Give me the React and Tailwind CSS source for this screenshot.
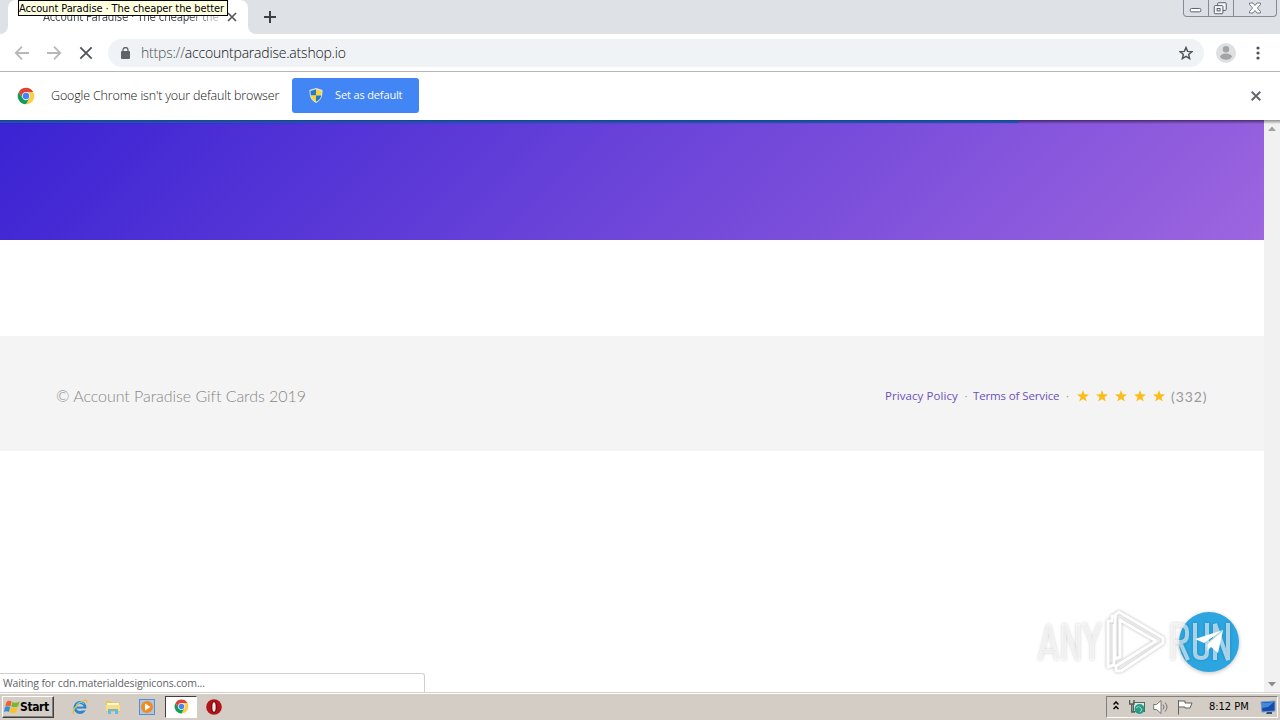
import React from 'react';

function ChromeLogo({ className }) {
  return (
    <svg className={className} viewBox="0 0 48 48">
      <circle cx="24" cy="24" r="22" fill="#fff" />
      <path d="M24 13 H43.1 A22 22 0 0 1 24 46 L33.5 29.5 Z" fill="#ffcd40" />
      <path d="M4.9 13 A22 22 0 0 0 24 46 L33.5 29.5 L14.5 29.5 Z" fill="#0f9d58" />
      <path d="M4.9 13 A22 22 0 0 1 43.1 13 H24 L14.5 29.5 Z" fill="#db4437" />
      <circle cx="24" cy="24" r="11" fill="#f1f1f1" />
      <circle cx="24" cy="24" r="8.6" fill="#4285f4" />
    </svg>
  );
}

function TabStrip() {
  return (
    <div className="relative flex h-[34px] shrink-0 bg-[#dee1e6]">
      <div className="w-2 bg-white">
        <div className="h-full rounded-br-lg bg-[#dee1e6]" />
      </div>
      <div className="flex h-full w-[240px] items-center rounded-t-lg bg-white pl-[35px]">
        <div className="w-[180px] overflow-hidden whitespace-nowrap bg-linear-to-r from-[#45494d] from-80% to-[#e0e0e0] bg-clip-text pt-px text-[11.5px] tracking-[-0.24px] text-transparent">
          Account Paradise · The cheaper the
        </div>
        <svg className="ml-[4px] size-[10px]" viewBox="0 0 10 10" stroke="#54585c" strokeWidth="1.7">
          <path d="M1 1L9 9M9 1L1 9" />
        </svg>
      </div>
      <div className="w-2 bg-white">
        <div className="h-full rounded-bl-lg bg-[#dee1e6]" />
      </div>
      <svg className="ml-[7px] mt-[10px] size-[14px]" viewBox="0 0 14 14" stroke="#3c4043" strokeWidth="2">
        <path d="M7 1V13M1 7H13" />
      </svg>
      <div className="ml-auto mr-[3px] flex h-[17px] w-[94px] overflow-hidden rounded-b-[4px] border border-t-0 border-[#858b95] bg-[#dce0e6]">
        <div className="w-[25px] border-r border-[#858b95]">
          <svg className="size-full" viewBox="0 0 25 16" fill="#fff" stroke="#555b66">
            <rect x="6.5" y="8.5" width="11" height="3.5" rx="1.2" />
          </svg>
        </div>
        <div className="w-[25px] border-r border-[#858b95]">
          <svg className="size-full" viewBox="0 0 25 16" fill="#f5f6f8" stroke="#555b66">
            <rect x="9" y="2.5" width="9" height="8" rx="1" />
            <rect x="5.5" y="5.5" width="9" height="8.5" rx="1" />
            <rect x="8.5" y="8.5" width="3" height="2.5" />
          </svg>
        </div>
        <div className="flex-1">
          <svg className="size-full" viewBox="0 0 42 16" fill="#fff" stroke="#666c76" strokeWidth="0.9">
            <path d="M15.5 3H19L21 5.5L23 3H26.5V4.5L23.4 8L26.5 11.5V13H23L21 10.5L19 13H15.5V11.5L18.6 8L15.5 4.5Z" />
          </svg>
        </div>
      </div>
      <div className="absolute left-[18px] top-0 h-4 w-[210px] whitespace-nowrap border border-black bg-[#ffffe1] text-[11px] leading-[15px] tracking-[-0.1px] text-black">
        Account Paradise · The cheaper the better
      </div>
    </div>
  );
}

function Toolbar() {
  return (
    <div className="flex h-[38px] shrink-0 items-center border-b border-[#b3b5b7] bg-white">
      <svg className="ml-[14px] size-4" viewBox="0 0 16 16" fill="none" stroke="#b6b8ba" strokeWidth="1.8">
        <path d="M15 8H2M8 1.7L1.8 8L8 14.3" />
      </svg>
      <svg className="ml-4 size-4" viewBox="0 0 16 16" fill="none" stroke="#b6b8ba" strokeWidth="1.8">
        <path d="M1 8H14M8 1.7L14.2 8L8 14.3" />
      </svg>
      <svg className="ml-4 size-4" viewBox="0 0 16 16" fill="none" stroke="#505458" strokeWidth="1.8">
        <path d="M2.3 2.3L13.7 13.7M13.7 2.3L2.3 13.7" />
      </svg>
      <div className="ml-[14px] flex h-7 w-[1096px] items-center rounded-full bg-[#f0f3f5] pl-[13px]">
        <svg className="h-3 w-[9px]" viewBox="0 0 9 12" fill="#5f6368">
          <rect x="0" y="4" width="9" height="8" rx="1" />
          <path d="M2 5V3A2.5 2.5 0 0 1 7 3V5" fill="none" stroke="#5f6368" strokeWidth="1.3" />
        </svg>
        <div className="-mt-px ml-[11px] whitespace-nowrap font-['Open_Sans'] text-[14px] font-light tracking-[-0.2px] text-[#101114]">
          <span className="text-[#4b5055]">https://</span>accountparadise.atshop.io
        </div>
        <svg className="ml-auto mr-[11px] size-[14px]" viewBox="0 0 24 24" fill="none" stroke="#50555a" strokeWidth="2.5">
          <path d="M12 2.5L14.8 9.2L22 9.8L16.5 14.5L18.2 21.6L12 17.8L5.8 21.6L7.5 14.5L2 9.8L9.2 9.2Z" />
        </svg>
      </div>
      <svg className="ml-3 size-5" viewBox="0 0 20 20">
        <circle cx="10" cy="10" r="10" fill="#dfe0e2" />
        <circle cx="10" cy="6.2" r="3.2" fill="#a2a4a7" />
        <ellipse cx="10" cy="13.6" rx="5.8" ry="3.1" fill="#a2a4a7" />
      </svg>
      <svg className="ml-[20px] h-4 w-1" viewBox="0 0 4 16" fill="#505458">
        <circle cx="2" cy="3" r="1.6" />
        <circle cx="2" cy="8" r="1.6" />
        <circle cx="2" cy="13" r="1.6" />
      </svg>
    </div>
  );
}

function DefaultBrowserBar() {
  return (
    <div className="flex h-[48px] shrink-0 items-center bg-white">
      <ChromeLogo className="ml-[17px] size-[18px]" />
      <div className="ml-4 w-[241px] whitespace-nowrap font-['Open_Sans'] text-[12.5px] font-light tracking-[-0.16px] text-[#101114]">
        Google Chrome isn't your default browser
      </div>
      <div className="mb-px flex h-[35px] w-[127px] items-center rounded-[3px] bg-[#4285f4] pl-[17px] font-['Open_Sans'] text-[11px] text-white">
        <svg className="h-[15px] w-[14px]" viewBox="0 0 14 15">
          <path d="M7 0L13.5 2C13.5 8 12.5 12 7 15C1.5 12 .5 8 .5 2Z" fill="#e4e7e5" />
          <path d="M7 1.2V7.5H1.8C1.5 6 1.5 4.5 1.5 2.9Z" fill="#2878c8" />
          <path d="M7 1.2V7.5H12.2C12.5 6 12.5 4.5 12.5 2.9Z" fill="#fbd334" />
          <path d="M7 7.5V13.8C4 12.2 2.3 10.5 1.8 7.5Z" fill="#fbd334" />
          <path d="M7 7.5V13.8C10 12.2 11.7 10.5 12.2 7.5Z" fill="#2878c8" />
        </svg>
        <span className="-mt-px ml-3 whitespace-nowrap tracking-[-0.14px]">Set as default</span>
      </div>
      <svg className="ml-auto mr-[19px] size-[10px]" viewBox="0 0 10 10" stroke="#65696d" strokeWidth="2">
        <path d="M.7 .7L9.3 9.3M9.3 .7L.7 9.3" />
      </svg>
    </div>
  );
}

function Star() {
  return (
    <svg className="size-3" viewBox="0 0 24 24" fill="#fbbd17">
      <path d="M12 0L15 8.6L24 8.9L16.9 14.4L19.4 23L12 18L4.6 23L7.1 14.4L0 8.9L9 8.6Z" />
    </svg>
  );
}

function ShopPage() {
  return (
    <div className="flex-1 bg-white">
      <div className="h-[120px] bg-[linear-gradient(135deg,#3a23d3_0%,#9d65df_100%)]">
        <div className="h-[4px] bg-linear-to-b from-black/50 to-transparent">
          <div className="h-[3px] w-[1019px] bg-linear-to-b from-[#184489] to-[#2058c0]" />
        </div>
      </div>
      <div className="mt-24 flex h-[115px] items-center bg-[#f4f4f4] pl-14 pr-[57px]">
        <div className="mt-[4px] whitespace-nowrap font-[Lato] text-[16px] font-light tracking-[-0.05px] text-[#888]">
          © Account Paradise Gift Cards 2019
        </div>
        <div className="ml-auto mt-[5px] flex items-center whitespace-nowrap font-['Open_Sans'] text-[11.5px] text-[#6c50b8]">
          <span className="w-[74px] tracking-[0.07px]">Privacy Policy</span>
          <span className="w-[14px] text-center text-[#999]">·</span>
          <span className="w-[87px] tracking-[-0.13px]">Terms of Service</span>
          <span className="w-[15px] text-center text-[#999]">·</span>
          <span className="-mt-px ml-[2px] flex gap-[7px]">
            <Star /><Star /><Star /><Star /><Star />
          </span>
          <span className="ml-[6px] w-[36px] pt-px font-[Lato] text-[14px] tracking-[0.9px] text-[#999]">(332)</span>
        </div>
      </div>
    </div>
  );
}

function Scrollbar() {
  return (
    <div className="flex w-4 shrink-0 flex-col justify-between bg-[#f1f1f1] bg-linear-to-b from-[#909090] to-[#f1f1f1] to-[4px] pb-[5px] pt-[6px]">
      <svg className="mx-auto h-[6px] w-2" viewBox="0 0 8 6" fill="#a0a0a0"><path d="M4 0.5L8 5H0Z" /></svg>
      <svg className="mx-auto h-[6px] w-2" viewBox="0 0 8 6" fill="#8c8c8c"><path d="M4 5.5L8 1H0Z" /></svg>
    </div>
  );
}

function Watermark() {
  return (
    <div className="absolute bottom-4 right-[38px] h-[68px] w-[206px]">
      <div className="absolute right-[3px] top-[4px] size-[60px] rounded-full bg-[#2ca5e0] shadow-[0_1px_4px_rgba(0,0,0,0.25)]" />
      <svg className="absolute inset-0 size-full drop-shadow-[0_0_1.5px_rgba(0,0,0,0.3)]" viewBox="0 0 206 68">
        <g fill="none" stroke="#fff" strokeOpacity="0.6" strokeWidth="4">
          <path d="M4 52L12.5 17L21 52M7 43H18" />
          <path d="M28 52V16L42 52V16" />
          <path d="M48 15L56 35L64 15M56 35V52" />
          <path d="M137 52V17H144Q151 17 151 24V27Q151 34 144 34H137M144 34L152 52" />
          <path d="M159 15V44Q159 50 165 50Q171 50 171 44V15" />
          <path d="M179 52V16L192 52V15" />
        </g>
        <g fill="#fff" fillOpacity="0.12" stroke="#fff" strokeWidth="3" strokeLinejoin="round">
          <path d="M83 4L127 30V35L85 63H80V58L120 33L84 12V49L79 51V7Z" />
          <path d="M81 8H76V13H72V59L78 57V16" fill="none" />
        </g>
      </svg>
      <svg className="absolute right-[18px] top-[21px] h-[26px] w-[29px]" viewBox="0 0 29 26" fill="#fff">
        <path d="M0 10L28 1L9 14Z" />
        <path d="M28 1L23 24L16 18L12 22L11 15Z" />
        <path d="M27 2L12 15V21" fill="none" stroke="#a6c5d5" strokeWidth="0.9" />
      </svg>
    </div>
  );
}

function Explorer() {
  return (
    <svg className="size-4" viewBox="0 0 16 16">
      <circle cx="8" cy="8.5" r="5" fill="none" stroke="#2687d2" strokeWidth="3" />
      <path d="M5 8.6H14" stroke="#2687d2" strokeWidth="2" />
      <path d="M10 10.5H15" stroke="#d6d3ce" strokeWidth="1.8" />
      <path d="M2 15C-1 13 5 4 12 1.5C15 .7 16 2 14 4" fill="none" stroke="#e8bc40" strokeWidth="1.3" />
      <path d="M4 6Q8 1 12 5" fill="none" stroke="#75c7f1" />
    </svg>
  );
}

function Taskbar() {
  return (
    <div className="flex h-[28px] shrink-0 items-center border-t border-[#d4d0c8] bg-[#d4cdc5] text-[11px] text-black shadow-[inset_0_1px_0_#ffffff]">
      <div className="ml-[2px] flex h-[22px] w-[52px] items-center border border-b-[#404040] border-l-white border-r-[#404040] border-t-white pl-px shadow-[inset_-1px_-1px_0_#808080]">
        <svg className="size-4 shrink-0" viewBox="0 0 16 16">
          <path d="M2.5 3C4 1 6 1.5 7.7 2.5L6.4 7.4C5 6.5 3 6.5 1.2 7.3Z" fill="#ef622d" />
          <path d="M8.5 3C10 4 12.5 4 15.5 2.5L14 7.5C11.5 8.5 9 8.5 7.2 7.5Z" fill="#78b82a" />
          <path d="M1 8.1C2.5 7.1 4.5 7.1 6.2 8.1L4.9 13C3.5 12 1.5 12 0 13Z" fill="#388dd7" />
          <path d="M6.9 8.3C8.5 9.5 11 9.5 13.7 8.2L12.3 13C10 14.5 7.5 14 5.5 13Z" fill="#f9c326" />
        </svg>
        <span className="w-[32px] font-['DejaVu_Sans_Condensed'] text-[12px] font-bold tracking-[-0.4px]">Start</span>
      </div>
      <div className="ml-[18px] flex items-center">
        <Explorer />
        <svg className="ml-[17px] size-4" viewBox="0 0 16 16">
          <path d="M1 2H6L7 3.5H15V13H1Z" fill="#e9c65a" />
          <path d="M2 4H14V9H2Z" fill="#fff7ce" />
          <path d="M1 6H15V12H1Z" fill="#f8df87" />
          <path d="M3 15V10H13V15H10V12H6V15Z" fill="#69b9df" />
        </svg>
        <svg className="ml-[18px] size-4" viewBox="0 0 16 16">
          <rect x=".5" y=".5" width="15" height="15" fill="#a8c9eb" stroke="#598fc5" />
          <circle cx="8" cy="8" r="6" fill="#f38a20" />
          <path d="M6 4.5L11.5 8L6 11.5Z" fill="#fff" />
        </svg>
        <div className="ml-[10px] flex h-[22px] w-8 items-center justify-center border border-b-white border-l-[#404040] border-r-white border-t-[#404040] bg-white">
          <ChromeLogo className="size-[15px]" />
        </div>
        <svg className="ml-[9px] size-4" viewBox="0 0 16 16">
          <circle cx="8" cy="8" r="7.8" fill="#b31319" />
          <ellipse cx="8" cy="8" rx="3" ry="6" fill="#6e0b0e" />
          <ellipse cx="8" cy="8" rx="1.7" ry="4.7" fill="#f7eaea" />
        </svg>
      </div>
      <div className="ml-auto mr-[2px] flex h-[22px] w-[172px] items-center border border-b-white border-l-[#808080] border-r-white border-t-[#808080] pl-[6px]">
        <svg className="mb-[2px] h-[9px] w-[6px]" viewBox="0 0 6 9" fill="none" stroke="#000" strokeWidth="1.5">
          <path d="M.5 3.5L3 1L5.5 3.5M.5 8L3 5.5L5.5 8" />
        </svg>
        <svg className="ml-[10px] size-4" viewBox="0 0 16 16">
          <rect x="4.5" y="3.5" width="11" height="9" fill="#dceae5" stroke="#536962" />
          <circle cx="10.5" cy="10" r="5" fill="#299a86" />
          <path d="M7 9Q10 6 12 9Q14 11 11 13" fill="none" stroke="#98d9ca" />
          <path d="M.5 1V5H5V1M2.8 5V13H6" fill="none" stroke="#526158" strokeWidth="1.5" />
        </svg>
        <svg className="ml-2 size-4" viewBox="0 0 16 16" fill="none" stroke="#77746f">
          <path d="M.7 5.5H3.5L8 1.5V14.5L3.5 10.5H.7Z" fill="#fff" />
          <path d="M10 5.5Q12 8 10 10.5M12 3.5Q16 8 12 12.5" />
        </svg>
        <svg className="ml-2 size-4" viewBox="0 0 16 16" fill="#fff" stroke="#62615c">
          <path d="M1.5 1V15.5M2 2H8V4H15L13 9H8V8H2" />
        </svg>
        <span className="ml-4 w-[41px] whitespace-nowrap pt-[2px] tracking-[-0.02px]">8:12 PM</span>
        <svg className="ml-[10px] size-4" viewBox="0 0 16 16">
          <path d="M1 3L15 2V12L2 13Z" fill="#174ca6" stroke="#779bd0" />
          <path d="M2 4L14 3L8 8L2 9Z" fill="#418bdc" />
          <path d="M7 13H12V15H6Z" fill="#314e75" />
        </svg>
      </div>
    </div>
  );
}

export default function App() {
  return (
    <div className="relative flex h-[720px] w-[1280px] flex-col overflow-hidden bg-white font-['DejaVu_Sans_Condensed','Noto_Sans',sans-serif]">
      <TabStrip />
      <Toolbar />
      <DefaultBrowserBar />
      <div className="relative flex flex-1">
        <ShopPage />
        <Scrollbar />
        <div className="absolute bottom-0 left-0 h-[19px] w-[425px] whitespace-nowrap rounded-tr-[3px] border-r border-t border-[#d0d0d0] bg-white pl-[3px] font-['Open_Sans'] text-[10.5px] leading-[18px] tracking-[-0.13px] text-[#5f6368]">
          Waiting for cdn.materialdesignicons.com...
        </div>
        <Watermark />
      </div>
      <Taskbar />
    </div>
  );
}
